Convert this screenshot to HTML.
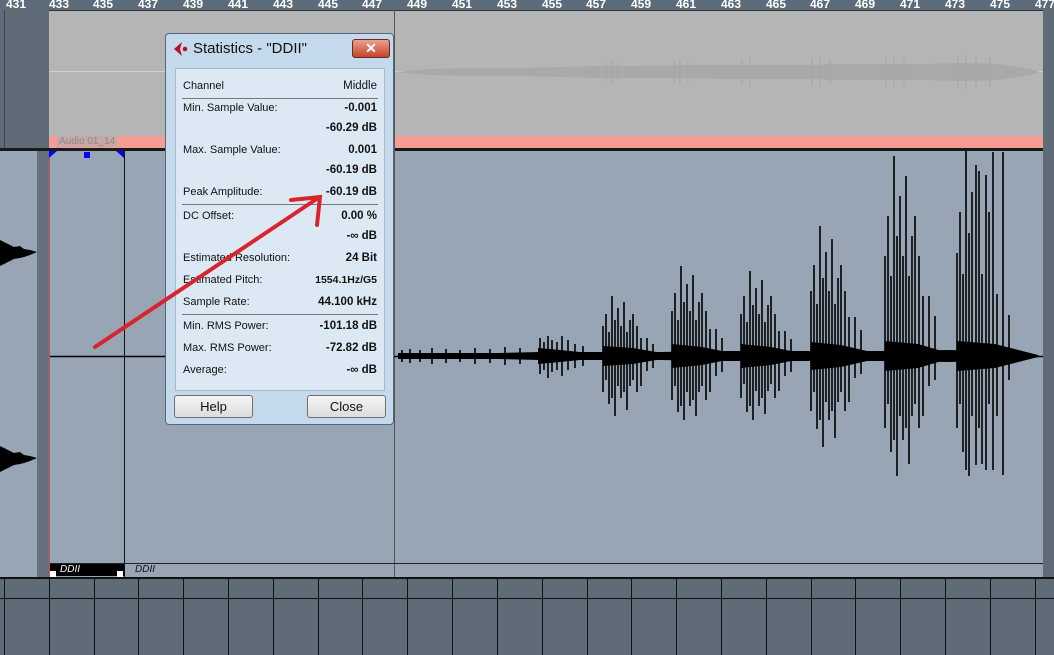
<!DOCTYPE html>
<html><head><meta charset="utf-8"><style>
*{margin:0;padding:0;box-sizing:border-box}
body{width:1054px;height:655px;overflow:hidden;background:#97a5b5;position:relative;font-family:"Liberation Sans",sans-serif}
.abs{position:absolute}
.rl{position:absolute;top:-3px;color:#fff;font-weight:bold;font-size:12px;transform:translateX(-50%)}
.dlg{position:absolute;left:165px;top:33px;width:229px;height:392px;background:#c5d9ec;border:1px solid #55677a;border-radius:4px}
.panel{position:absolute;left:9px;top:34px;width:210px;height:323px;background:#dce9f5;border:1px solid #a8b8c8;font-size:11px;color:#111}
.row{position:absolute;left:7px;right:7px;height:14px}
.row .v{position:absolute;right:0;font-weight:bold;font-size:11.5px}
.sep{position:absolute;left:6px;right:6px;height:1px;background:#777}
.btn{position:absolute;top:361px;width:79px;height:23px;border:1px solid #707070;border-radius:3px;background:linear-gradient(#f4f4f4,#dcdcdc);font-size:13px;text-align:center;line-height:21px;color:#111}
</style></head><body>
<div class="abs" style="left:0;top:0;width:1054px;height:10px;background:#5c6b79"></div>
<div class="rl" style="left:16px">431</div><div class="rl" style="left:59px">433</div><div class="rl" style="left:103px">435</div><div class="rl" style="left:148px">437</div><div class="rl" style="left:193px">439</div><div class="rl" style="left:238px">441</div><div class="rl" style="left:283px">443</div><div class="rl" style="left:328px">445</div><div class="rl" style="left:372px">447</div><div class="rl" style="left:417px">449</div><div class="rl" style="left:462px">451</div><div class="rl" style="left:507px">453</div><div class="rl" style="left:552px">455</div><div class="rl" style="left:596px">457</div><div class="rl" style="left:641px">459</div><div class="rl" style="left:686px">461</div><div class="rl" style="left:731px">463</div><div class="rl" style="left:776px">465</div><div class="rl" style="left:820px">467</div><div class="rl" style="left:865px">469</div><div class="rl" style="left:910px">471</div><div class="rl" style="left:955px">473</div><div class="rl" style="left:1000px">475</div><div class="rl" style="left:1045px">477</div>
<div class="abs" style="left:0;top:10px;width:50px;height:141px;background:#5f6c78"></div>
<div class="abs" style="left:4px;top:10px;width:1px;height:141px;background:#3a4550"></div>
<div class="abs" style="left:49px;top:10px;width:994px;height:127px;background:#b5b5b5;border-top:1px solid #333"></div>
<div class="abs" style="left:49px;top:71px;width:994px;height:1px;background:#d0d0d0"></div>
<div class="abs" style="left:49px;top:136px;width:994px;height:13px;background:#f59d95"></div>
<div class="abs" style="left:57px;top:136px;font-size:10px;color:#888;background:#c8a8a4;padding:0 2px">Audio 01_14</div>
<div class="abs" style="left:0;top:148px;width:1054px;height:3px;background:#1a1a1a"></div>
<div class="abs" style="left:1043px;top:10px;width:11px;height:645px;background:#5f6c78"></div>
<div class="abs" style="left:37px;top:151px;width:12px;height:427px;background:#65727d"></div>
<div class="abs" style="left:49px;top:151px;width:1px;height:427px;background:#d05050"></div>
<div class="abs" style="left:124px;top:151px;width:1px;height:427px;background:#111"></div>
<div class="abs" style="left:394px;top:10px;width:1px;height:645px;background:#555"></div>
<div class="abs" style="left:50px;top:563px;width:993px;height:1px;background:#222"></div>
<div class="abs" style="left:50px;top:564px;width:74px;height:12px;background:#000;color:#fff;font-size:10px;font-style:italic;padding-left:10px">DDII</div>
<div class="abs" style="left:50px;top:571px;width:6px;height:6px;background:#fff"></div>
<div class="abs" style="left:117px;top:571px;width:6px;height:6px;background:#fff"></div>
<div class="abs" style="left:135px;top:564px;font-size:10px;font-style:italic;color:#111">DDII</div>
<div class="abs" style="left:84px;top:152px;width:6px;height:6px;background:#00f"></div>
<div class="abs" style="left:0;top:577px;width:1054px;height:78px;background:#5f6c78;border-top:2px solid #111"></div>
<div class="abs" style="left:0;top:598px;width:1054px;height:1px;background:#111"></div>
<svg class="abs" style="left:0;top:0" width="1054" height="655">
<g stroke="#111" stroke-width="1">
<line x1="4.5" y1="579" x2="4.5" y2="655"/><line x1="49.5" y1="579" x2="49.5" y2="655"/><line x1="94.5" y1="579" x2="94.5" y2="655"/><line x1="138.5" y1="579" x2="138.5" y2="655"/><line x1="183.5" y1="579" x2="183.5" y2="655"/><line x1="228.5" y1="579" x2="228.5" y2="655"/><line x1="273.5" y1="579" x2="273.5" y2="655"/><line x1="318.5" y1="579" x2="318.5" y2="655"/><line x1="362.5" y1="579" x2="362.5" y2="655"/><line x1="407.5" y1="579" x2="407.5" y2="655"/><line x1="452.5" y1="579" x2="452.5" y2="655"/><line x1="497.5" y1="579" x2="497.5" y2="655"/><line x1="542.5" y1="579" x2="542.5" y2="655"/><line x1="587.5" y1="579" x2="587.5" y2="655"/><line x1="631.5" y1="579" x2="631.5" y2="655"/><line x1="676.5" y1="579" x2="676.5" y2="655"/><line x1="721.5" y1="579" x2="721.5" y2="655"/><line x1="766.5" y1="579" x2="766.5" y2="655"/><line x1="811.5" y1="579" x2="811.5" y2="655"/><line x1="855.5" y1="579" x2="855.5" y2="655"/><line x1="900.5" y1="579" x2="900.5" y2="655"/><line x1="945.5" y1="579" x2="945.5" y2="655"/><line x1="990.5" y1="579" x2="990.5" y2="655"/><line x1="1035.5" y1="579" x2="1035.5" y2="655"/>
</g>
<polygon points="49,151 57,151 49,158" fill="#00f"/><polygon points="124,151 116,151 124,158" fill="#00f"/>
<polygon points="395,72 430,69 470,68 520,68 560,67 600,66 640,66 680,65 720,65 760,65 800,65 840,64 880,64 920,64 960,63 1000,64 1030,69 1040,72 1030,75 1000,80 960,81 920,80 880,80 840,80 800,79 760,79 720,79 680,78 640,78 600,78 560,77 520,76 470,76 430,75" fill="#a9a9a9"/>
<path d="M606 62V82M612 60V84M618 63V80M674 60V84M680 58V86M688 61V82M742 59V85M750 58V86M812 58V86M820 56V88M830 59V84M886 57V88M894 56V88M904 58V86M958 56V88M966 55V90M976 56V88M990 57V87" stroke="#a5a5a5" stroke-width="1"/>
<path d="M0,240 L8,244 L14,247 L20,246 L24,249 L30,250 L37,252 L30,255 L24,257 L20,258 L14,259 L8,262 L0,266Z M0,446 L8,450 L14,453 L20,452 L24,455 L30,456 L37,458 L30,461 L24,463 L20,464 L14,465 L8,468 L0,472Z" fill="#000"/>
<line x1="50" y1="356.5" x2="1043" y2="356.5" stroke="#000" stroke-width="1.5"/>
<g fill="#000">
<polygon points="398,353 450,353 500,353 540,352 600,352 660,352 720,351 800,351 880,351 950,350 1030,353 1040,356 1030,359 950,362 880,361 800,361 720,361 660,360 600,360 540,360 500,359 450,359 398,359"/>
<polygon points="538,348 560,350 600,354 600,358 560,362 538,364"/>
<polygon points="603,346 633,348 668,354 668,358 633,364 603,366"/>
<polygon points="672,344 702,347 737,354 737,358 702,365 672,368"/>
<polygon points="741,344 771,347 806,354 806,358 771,365 741,368"/>
<polygon points="811,342 841,345 880,354 880,358 841,367 811,370"/>
<polygon points="885,341 918,344 952,354 952,358 918,368 885,371"/>
<polygon points="957,341 995,344 1038,355 1038,357 995,368 957,371"/>
</g>
<g stroke="#000" stroke-width="1.6" fill="none">
<path d="M402 350V362M410 349V363M420 350V362M432 348V364M446 349V363M460 350V362M475 348V364M490 349V363M505 347V365M520 348V364M540 338V374M544 342V370M548 336V378M552 340V372M557 342V370M562 336V376M568 340V370M575 344V368M583 346V366"/>
<path d="M603 326V392M606 314V380M609 332V404M612 296V398M615 320V416M618 308V386M621 326V398M624 302V392M627 332V410M630 320V386M633 314V380M637 326V392M641 338V386M647 338V371M653 344V368"/>
<path d="M672 311V400M675 293V386M678 320V412M681 266V406M684 302V420M687 284V392M690 311V406M693 275V400M696 320V416M699 302V392M702 293V386M706 311V400M710 329V392M716 329V376M722 338V372"/>
<path d="M741 314V398M744 296V384M747 322V412M750 271V406M753 305V420M756 288V391M759 314V406M762 280V398M765 322V414M768 305V391M771 296V384M775 314V398M779 331V391M785 331V376M791 339V372"/>
<path d="M811 291V411M814 265V392M817 304V429M820 226V420M823 278V447M826 252V402M829 291V420M832 239V411M835 304V438M838 278V402M841 265V392M845 291V411M849 317V402M855 317V378M861 330V374"/>
<path d="M885 256V428M888 216V404M891 276V452M894 156V440M897 236V476M900 196V416M903 256V440M906 176V428M909 276V464M912 236V416M915 216V404M919 256V428M923 296V416M929 296V386M935 316V380"/>
<path d="M957 253V428M960 212V404M963 274V452M966 151V470M969 233V476M972 192V416M976 165V465M979 171V428M982 274V464M986 175V470M989 212V404M993 152V470M997 294V416M1003 152V475M1009 315V380"/>
</g>
</svg>
<div class="dlg">
<svg class="abs" style="left:6px;top:6px" width="18" height="18"><path d="M10,2 L2,9 L10,16 L8,9Z" fill="#b8102a"/><circle cx="13" cy="9" r="2.3" fill="#b8102a"/></svg>
<div class="abs" style="left:27px;top:6px;font-size:15px;color:#111">Statistics - "DDII"</div>
<div class="abs" style="left:186px;top:5px;width:38px;height:19px;border:1px solid #6a2a20;border-radius:3px;background:linear-gradient(#e9a08c,#c8442c);color:#fff;font-weight:bold;font-size:14px;text-align:center;line-height:17px">✕</div>
<div class="panel">
<div class="row" style="top:11px">Channel<span class="v" style="font-weight:normal">Middle</span></div>
<div class="sep" style="top:29px"></div>
<div class="row" style="top:33px">Min. Sample Value:<span class="v">-0.001</span></div>
<div class="row" style="top:53px"><span class="v">-60.29 dB</span></div>
<div class="row" style="top:75px">Max. Sample Value:<span class="v">0.001</span></div>
<div class="row" style="top:95px"><span class="v">-60.19 dB</span></div>
<div class="row" style="top:117px">Peak Amplitude:<span class="v">-60.19 dB</span></div>
<div class="sep" style="top:135px"></div>
<div class="row" style="top:141px">DC Offset:<span class="v">0.00 %</span></div>
<div class="row" style="top:161px"><span class="v">-∞ dB</span></div>
<div class="row" style="top:183px">Estimated Resolution:<span class="v">24 Bit</span></div>
<div class="row" style="top:205px">Estimated Pitch:<span class="v" style="font-size:10.5px">1554.1Hz/G5</span></div>
<div class="row" style="top:227px">Sample Rate:<span class="v">44.100 kHz</span></div>
<div class="sep" style="top:245px"></div>
<div class="row" style="top:251px">Min. RMS Power:<span class="v">-101.18 dB</span></div>
<div class="row" style="top:273px">Max. RMS Power:<span class="v">-72.82 dB</span></div>
<div class="row" style="top:295px">Average:<span class="v">-∞ dB</span></div>
</div>
<div class="btn" style="left:8px">Help</div>
<div class="btn" style="left:141px">Close</div>
</div>
<svg class="abs" style="left:0;top:0" width="1054" height="655"><g stroke="#d8242c" stroke-width="4" stroke-linecap="round" fill="none"><line x1="95" y1="347" x2="318" y2="198"/><polyline points="291,200 320,197 317,225"/></g></svg>
</body></html>
